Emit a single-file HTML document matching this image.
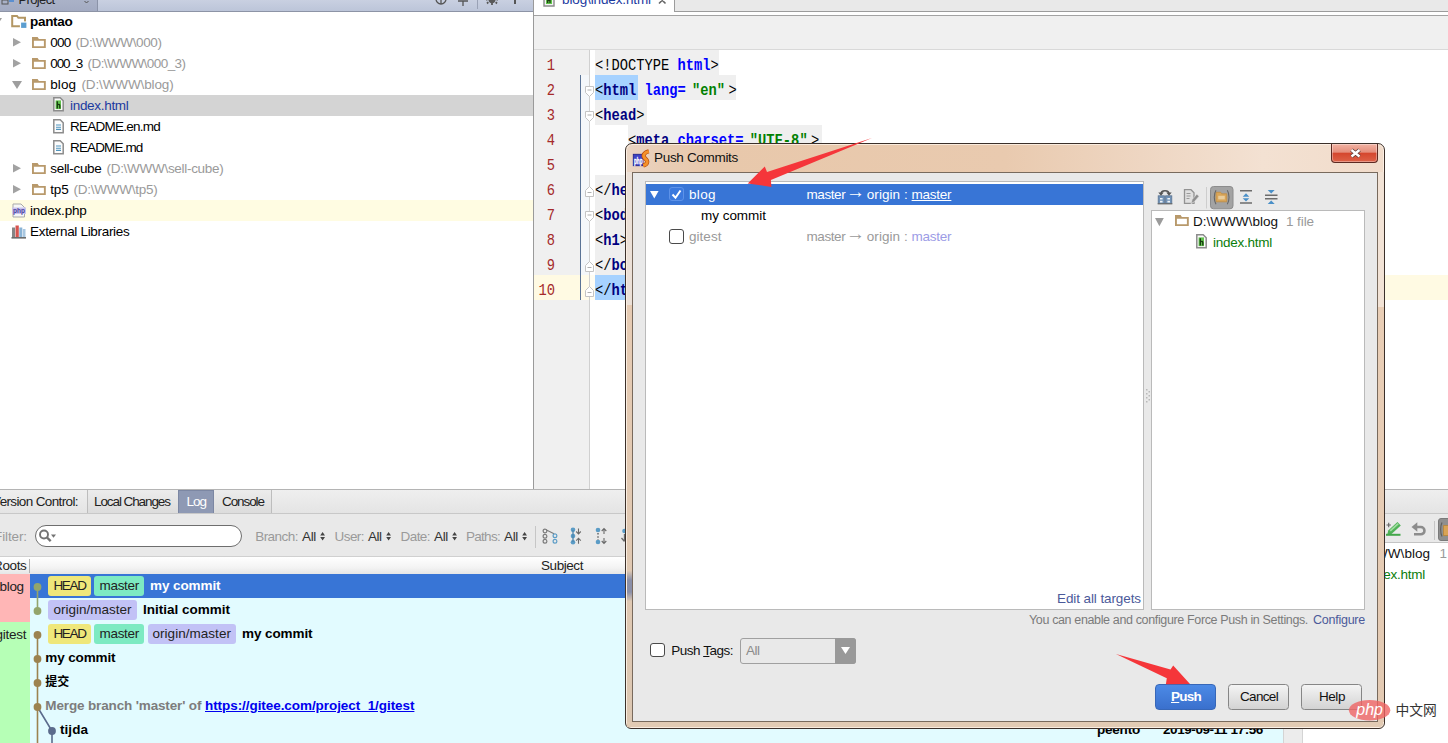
<!DOCTYPE html>
<html lang="en"><head><meta charset="utf-8"><title>Push Commits</title>
<style>
html,body{margin:0;padding:0;}
body{width:1448px;height:743px;overflow:hidden;position:relative;background:#fff;font-family:"Liberation Sans","Noto Sans CJK SC",sans-serif;font-size:13px;}
.t{position:absolute;white-space:pre;line-height:20px;height:20px;}
.code{position:absolute;white-space:pre;font-family:"Liberation Mono",monospace;font-size:16.5px;line-height:25px;height:25px;transform:scaleX(0.8333);transform-origin:0 0;color:#000;}
.code b{font-weight:bold;}
.q1{display:inline-block;width:17.5px;text-align:right;}
.q2{display:inline-block;width:14px;text-align:left;}
.ln{position:absolute;font-family:"Liberation Mono",monospace;font-size:16.5px;line-height:25px;height:25px;color:#a52a2a;transform:scaleX(0.8333);transform-origin:100% 0;text-align:right;}
svg{position:absolute;overflow:visible;}
</style></head><body>
<div style="position:absolute;left:0px;top:0px;width:534px;height:489px;background:#fff;"></div>
<div style="position:absolute;left:0px;top:0px;width:534px;height:11px;background:linear-gradient(#c9d0e1,#bcc5d9);"></div>
<div style="position:absolute;left:0px;top:0px;width:98px;height:11px;background:linear-gradient(#aab2c8,#a3abc2);border-right:1px solid #8b93a8;box-sizing:border-box;"></div>
<div style="position:absolute;left:0px;top:11px;width:534px;height:1px;background:#8d94a6;"></div>
<span class="t " style="left:18.6px;top:-10.2px;font-size:13px;color:#222;letter-spacing:-0.653px;">Project</span>
<svg style="left:0;top:0" width="534" height="12"><g fill="none" stroke="#555" stroke-width="1.3"><circle cx="441" cy="-1" r="5"/><path d="M441 -1v5"/><path d="M458 1h10M463 1v5"/><path d="M477.5 0v9" stroke="#9aa2b6" stroke-width="1"/><circle cx="492" cy="-0.500" r="3.600" fill="#595959" stroke="none"/><path d="M488.300 2.200l-1.300 1.300M492 3v2M495.700 2.200l1.300 1.300M487.500 -0.500h-1.500M496.500 -0.500h1.500" stroke="#595959" stroke-width="1.800"/><path d="M515 0v4" stroke-width="2"/><path d="M84.5 1l2 2 2-2" stroke-width="1"/></g><rect x="2" y="0" width="6" height="4" fill="none" stroke="#555"/><rect x="9" y="0" width="5" height="2" fill="#5b8fd0"/></svg>
<div style="position:absolute;left:0px;top:95px;width:534px;height:21px;background:#d4d4d4;"></div>
<div style="position:absolute;left:0px;top:200px;width:534px;height:21px;background:#fffce2;"></div>
<svg style="left:11px;top:14px" width="17" height="16"><path d="M1.2 2h4.8l1.4 1.8h6.6v8.4h-12.8z" fill="none" stroke="#b39764" stroke-width="2"/><rect x="9.5" y="8" width="6.5" height="6.5" fill="#5c9ed0" stroke="#fff" stroke-width="1.2"/></svg>
<span class="t " style="left:30px;top:11.5px;font-size:13.5px;color:#000;font-weight:bold;letter-spacing:-0.297px;">pantao</span>
<svg style="left:-8px;top:17.9px" width="11" height="9"><path d="M0 0h10l-5 8z" fill="#9e9e9e"/></svg>
<svg style="left:13px;top:38.3px" width="9" height="9"><path d="M0 0l8 4.200-8 4.200z" fill="#a2a2a2"/></svg>
<svg style="left:32px;top:37.1px" width="15" height="12"><path d="M0 0h5.600l1.300 1.900h6.900v9.200h-13.800z M1.900 3.700v5.500h10v-5.500z" fill="#b8996b" fill-rule="evenodd"/></svg>
<span class="t " style="left:50.3px;top:32.5px;font-size:13.5px;color:#000;letter-spacing:-0.782px;">000</span>
<span class="t " style="left:75.5px;top:32.5px;font-size:13.5px;color:#9a9a9a;letter-spacing:-0.396px;">(D:\WWW\000)</span>
<svg style="left:13px;top:59.3px" width="9" height="9"><path d="M0 0l8 4.200-8 4.200z" fill="#a2a2a2"/></svg>
<svg style="left:32px;top:58.1px" width="15" height="12"><path d="M0 0h5.600l1.300 1.900h6.900v9.200h-13.800z M1.900 3.700v5.500h10v-5.500z" fill="#b8996b" fill-rule="evenodd"/></svg>
<span class="t " style="left:50.3px;top:53.5px;font-size:13.5px;color:#000;letter-spacing:-1.176px;">000_3</span>
<span class="t " style="left:87.5px;top:53.5px;font-size:13.5px;color:#9a9a9a;letter-spacing:-0.556px;">(D:\WWW\000_3)</span>
<svg style="left:12px;top:80.9px" width="11" height="9"><path d="M0 0h10l-5 8z" fill="#9e9e9e"/></svg>
<svg style="left:32px;top:79.1px" width="15" height="12"><path d="M0 0h5.600l1.300 1.900h6.900v9.200h-13.800z M1.900 3.700v5.500h10v-5.500z" fill="#b8996b" fill-rule="evenodd"/></svg>
<span class="t " style="left:50.3px;top:74.5px;font-size:13.5px;color:#000;letter-spacing:0.038px;">blog</span>
<span class="t " style="left:81.5px;top:74.5px;font-size:13.5px;color:#9a9a9a;letter-spacing:-0.135px;">(D:\WWW\blog)</span>
<svg style="left:13px;top:164.3px" width="9" height="9"><path d="M0 0l8 4.200-8 4.200z" fill="#a2a2a2"/></svg>
<svg style="left:32px;top:163.1px" width="15" height="12"><path d="M0 0h5.600l1.300 1.900h6.900v9.200h-13.800z M1.900 3.700v5.500h10v-5.500z" fill="#b8996b" fill-rule="evenodd"/></svg>
<span class="t " style="left:50.3px;top:158.5px;font-size:13.5px;color:#000;letter-spacing:-0.318px;">sell-cube</span>
<span class="t " style="left:106.5px;top:158.5px;font-size:13.5px;color:#9a9a9a;letter-spacing:-0.293px;">(D:\WWW\sell-cube)</span>
<svg style="left:13px;top:185.3px" width="9" height="9"><path d="M0 0l8 4.200-8 4.200z" fill="#a2a2a2"/></svg>
<svg style="left:32px;top:184.1px" width="15" height="12"><path d="M0 0h5.600l1.300 1.900h6.900v9.200h-13.800z M1.900 3.700v5.500h10v-5.500z" fill="#b8996b" fill-rule="evenodd"/></svg>
<span class="t " style="left:50.3px;top:179.5px;font-size:13.5px;color:#000;letter-spacing:-0.194px;">tp5</span>
<span class="t " style="left:73.5px;top:179.5px;font-size:13.5px;color:#9a9a9a;letter-spacing:-0.249px;">(D:\WWW\tp5)</span>
<svg style="left:53px;top:97.2px" width="12" height="16"><path d="M0.800 0.800h6.400l3 3v10h-9.400z" fill="#fafafa" stroke="#8c8c8c" stroke-width="1.500"/><rect x="2.600" y="3.400" width="5.400" height="8.700" fill="#62c24e"/><path d="M4.300 4.200v7.200M4.300 8.100c1.200-1 2.500-.8 2.500.4v2.900" stroke="#173a10" stroke-width="1.300" fill="none"/></svg>
<span class="t " style="left:70px;top:95.5px;font-size:13.5px;color:#1b3aa0;letter-spacing:-0.306px;">index.html</span>
<svg style="left:53px;top:118.6px" width="12" height="16"><path d="M0.800 0.800h6.400l3 3v10h-9.400z" fill="#fcfcfc" stroke="#8c8c8c" stroke-width="1.500"/><path d="M3 6h5M3 8.200h5M3 10.400h5" stroke="#4f94bd" stroke-width="1.100"/></svg>
<span class="t " style="left:70px;top:116.5px;font-size:13.5px;color:#000;letter-spacing:-0.754px;">README.en.md</span>
<svg style="left:53px;top:139.6px" width="12" height="16"><path d="M0.800 0.800h6.400l3 3v10h-9.400z" fill="#fcfcfc" stroke="#8c8c8c" stroke-width="1.500"/><path d="M3 6h5M3 8.200h5M3 10.400h5" stroke="#4f94bd" stroke-width="1.100"/></svg>
<span class="t " style="left:70px;top:137.5px;font-size:13.5px;color:#000;letter-spacing:-0.863px;">README.md</span>
<svg style="left:12px;top:203px" width="14" height="15"><path d="M1 1h8l3.5 3.5v9.5h-11.5z" fill="#f6f6f6" stroke="#a9a9a9" stroke-width="1"/><rect x="0" y="4.500" width="14" height="6.500" fill="#c9c3ee"/><text x="7" y="10" font-size="6.500" font-family="Liberation Sans,sans-serif" font-weight="bold" fill="#4b3f9c" text-anchor="middle" textLength="12" lengthAdjust="spacingAndGlyphs">php</text></svg>
<span class="t " style="left:30px;top:200.5px;font-size:13.5px;color:#000;letter-spacing:-0.233px;">index.php</span>
<svg style="left:11px;top:224px" width="15" height="15"><rect x="1" y="3.500" width="3" height="10" fill="#858585"/><rect x="4.500" y="1.500" width="3.300" height="12" fill="#d6544e"/><rect x="8.300" y="3.500" width="3" height="10" fill="#8ab4d6"/><rect x="11.800" y="5" width="2.700" height="8.500" fill="#a9c7e0"/><rect x="0.500" y="13" width="14.500" height="1.600" fill="#6b6b6b"/></svg>
<span class="t " style="left:30px;top:221.5px;font-size:13.5px;color:#000;letter-spacing:-0.312px;">External Libraries</span>
<div style="position:absolute;left:533px;top:0px;width:1px;height:489px;background:#9a9a9a;"></div>
<div style="position:absolute;left:534px;top:0px;width:914px;height:489px;background:#fff;"></div>
<div style="position:absolute;left:674px;top:0px;width:774px;height:12px;background:#e9e9e9;border-left:1px solid #9c9c9c;border-bottom:1px solid #9c9c9c;box-sizing:border-box;"></div>
<div style="position:absolute;left:534px;top:15px;width:914px;height:1px;background:#a3a3a3;"></div>
<div style="position:absolute;left:534px;top:16px;width:914px;height:33px;background:#f0f0f0;"></div>
<div style="position:absolute;left:534px;top:49px;width:914px;height:1px;background:#d9d9d9;"></div>
<svg style="left:543px;top:-8px" width="12" height="15"><path d="M1 1h7l3 3v10h-10z" fill="#f4f4f4" stroke="#8a8a8a" stroke-width="1.4"/><rect x="3" y="4" width="6" height="8" fill="#5fc64a"/><path d="M4.7 5v6M4.7 8.3h2.3v2.7" stroke="#1d3b12" stroke-width="1.3" fill="none"/></svg>
<span class="t " style="left:562px;top:-10px;font-size:13.5px;color:#1b3aa0;letter-spacing:-0.124px;">blog\index.html</span>
<svg style="left:657.500px;top:-4px" width="9" height="9"><path d="M1 1l6.5 6.5M7.5 1l-6.5 6.5" stroke="#666" stroke-width="1.6"/></svg>
<div style="position:absolute;left:534px;top:50px;width:56px;height:439px;background:#f0f0f0;"></div>
<div style="position:absolute;left:581px;top:75px;width:8px;height:200px;background:#f4f7fa;"></div>
<div style="position:absolute;left:534px;top:275px;width:914px;height:25px;background:#fffae3;"></div>
<div style="position:absolute;left:581px;top:275px;width:8px;height:25px;background:#fffbe9;"></div>
<div style="position:absolute;left:590px;top:275px;width:5px;height:25px;background:#fffdf2;"></div>
<div style="position:absolute;left:589px;top:50px;width:1px;height:439px;background:#d0d0d0;"></div>
<div style="position:absolute;left:580px;top:75px;width:1px;height:225px;background:#5a7396;"></div>
<div style="position:absolute;left:595px;top:50px;width:124.05px;height:25px;background:#efefef;"></div>
<div style="position:absolute;left:595px;top:75px;width:140.59px;height:25px;background:#efefef;"></div>
<div style="position:absolute;left:595px;top:100px;width:52.101px;height:25px;background:#efefef;"></div>
<div style="position:absolute;left:628.08px;top:125px;width:194.345px;height:25px;background:#efefef;"></div>
<div style="position:absolute;left:595px;top:175px;width:57.89px;height:25px;background:#efefef;"></div>
<div style="position:absolute;left:595px;top:200px;width:49.62px;height:25px;background:#efefef;"></div>
<div style="position:absolute;left:595px;top:225px;width:165.4px;height:25px;background:#efefef;"></div>
<div style="position:absolute;left:595px;top:250px;width:57.89px;height:25px;background:#efefef;"></div>
<div style="position:absolute;left:595px;top:75px;width:43.004px;height:25px;background:#a6d2ff;"></div>
<div style="position:absolute;left:595px;top:275px;width:51.274px;height:25px;background:#a6d2ff;"></div>
<div class="code" style="left:595px;top:52.5px">&lt;!DOCTYPE <b style="color:#0000ff">html</b>&gt;</div>
<div class="code" style="left:595px;top:77.5px">&lt;<b style="color:#000080">html</b> <b style="color:#0000ff">lang=</b><b class="q1" style="color:#008000">"</b><b style="color:#008000">en</b><b class="q2" style="color:#008000">"</b>&gt;</div>
<div class="code" style="left:595px;top:102.5px">&lt;<b style="color:#000080">head</b>&gt;</div>
<div class="code" style="left:595px;top:127.5px">    &lt;<b style="color:#000080">meta</b> <b style="color:#0000ff">charset=</b><b class="q1" style="color:#008000">"</b><b style="color:#008000">UTF-8</b><b class="q2" style="color:#008000">"</b>&gt;</div>
<div class="code" style="left:595px;top:152.5px">    &lt;<b style="color:#000080">title</b>&gt;Title&lt;/<b style="color:#000080">title</b>&gt;</div>
<div class="code" style="left:595px;top:177.5px">&lt;/<b style="color:#000080">head</b>&gt;</div>
<div class="code" style="left:595px;top:202.5px">&lt;<b style="color:#000080">body</b>&gt;</div>
<div class="code" style="left:595px;top:227.5px">&lt;<b style="color:#000080">h1</b>&gt;hello world&lt;/<b style="color:#000080">h1</b>&gt;</div>
<div class="code" style="left:595px;top:252.5px">&lt;/<b style="color:#000080">body</b>&gt;</div>
<div class="code" style="left:595px;top:277.5px">&lt;/<b style="color:#000080">html</b>&gt;</div>
<div class="ln" style="left:514.500px;width:40px;top:52.5px">1</div>
<div class="ln" style="left:514.500px;width:40px;top:77.5px">2</div>
<div class="ln" style="left:514.500px;width:40px;top:102.5px">3</div>
<div class="ln" style="left:514.500px;width:40px;top:127.5px">4</div>
<div class="ln" style="left:514.500px;width:40px;top:152.5px">5</div>
<div class="ln" style="left:514.500px;width:40px;top:177.5px">6</div>
<div class="ln" style="left:514.500px;width:40px;top:202.5px">7</div>
<div class="ln" style="left:514.500px;width:40px;top:227.5px">8</div>
<div class="ln" style="left:514.500px;width:40px;top:252.5px">9</div>
<div class="ln" style="left:514.500px;width:40px;top:277.5px">10</div>
<svg style="left:585px;top:86px" width="9" height="13"><path d="M0.5 0.5h8v6l-4 4-4-4z" fill="#fff" stroke="#c4c4c4"/><path d="M2.5 4 h4" stroke="#b0b0b0"/></svg>
<svg style="left:585px;top:111px" width="9" height="13"><path d="M0.5 0.5h8v6l-4 4-4-4z" fill="#fff" stroke="#c4c4c4"/><path d="M2.5 4 h4" stroke="#b0b0b0"/></svg>
<svg style="left:585px;top:211px" width="9" height="13"><path d="M0.5 0.5h8v6l-4 4-4-4z" fill="#fff" stroke="#c4c4c4"/><path d="M2.5 4 h4" stroke="#b0b0b0"/></svg>
<svg style="left:585px;top:186px" width="9" height="13"><path d="M0.5 10.500h8v-6l-4-4-4 4z" fill="#fff" stroke="#c4c4c4"/><path d="M2.5 6.5 h4" stroke="#b0b0b0"/></svg>
<svg style="left:585px;top:261px" width="9" height="13"><path d="M0.5 10.500h8v-6l-4-4-4 4z" fill="#fff" stroke="#c4c4c4"/><path d="M2.5 6.5 h4" stroke="#b0b0b0"/></svg>
<svg style="left:585px;top:286px" width="9" height="13"><path d="M0.5 10.500h8v-6l-4-4-4 4z" fill="#fff" stroke="#c4c4c4"/><path d="M2.5 6.5 h4" stroke="#b0b0b0"/></svg>
<div style="position:absolute;left:0px;top:489px;width:1448px;height:254px;background:#fff;"></div>
<div style="position:absolute;left:0px;top:489px;width:1448px;height:1px;background:#b4b4b4;"></div>
<div style="position:absolute;left:0px;top:490px;width:1448px;height:23px;background:linear-gradient(#efefef,#e4e4e4);"></div>
<div style="position:absolute;left:0px;top:513px;width:1448px;height:1px;background:#c8c8c8;"></div>
<div style="position:absolute;left:0px;top:514px;width:1448px;height:43px;background:#e9e9e9;"></div>
<span class="t " style="left:-8px;top:491.5px;font-size:13.5px;color:#222;letter-spacing:-0.631px;">Version Control:</span>
<div style="position:absolute;left:86.5px;top:490px;width:92px;height:23px;background:linear-gradient(#ececec,#dcdcdc);border-left:1px solid #bdbdbd;border-right:1px solid #bdbdbd;box-sizing:border-box;"></div>
<span class="t " style="left:94px;top:491.5px;font-size:13.5px;color:#222;letter-spacing:-1.087px;">Local Changes</span>
<div style="position:absolute;left:178px;top:490px;width:36px;height:23px;background:#8e99b4;border:1px solid #7c87a3;border-bottom:none;box-sizing:border-box;"></div>
<span class="t " style="left:186.5px;top:491.5px;font-size:13.5px;color:#fff;letter-spacing:-1.016px;">Log</span>
<div style="position:absolute;left:214px;top:490px;width:58px;height:23px;background:linear-gradient(#ececec,#dcdcdc);border-right:1px solid #bdbdbd;box-sizing:border-box;"></div>
<span class="t " style="left:222px;top:491.5px;font-size:13.5px;color:#222;letter-spacing:-1.080px;">Console</span>
<span class="t " style="left:-6px;top:526.8px;font-size:13.5px;color:#9a9a9a;letter-spacing:-0.109px;">Filter:</span>
<div style="position:absolute;left:35px;top:525px;width:207px;height:22px;background:#fff;border:1px solid #6e6e6e;border-radius:11px;box-sizing:border-box;"></div>
<svg style="left:38px;top:528px" width="20" height="16"><circle cx="6" cy="6.500" r="4" fill="none" stroke="#747474" stroke-width="1.900"/><path d="M9 9.500l3.700 3.700" stroke="#747474" stroke-width="2.400"/><path d="M13 6.500h5l-2.500 3.200z" fill="#747474"/></svg>
<span class="t " style="left:255.2px;top:526.8px;font-size:13.5px;color:#9a9a9a;letter-spacing:-0.535px;">Branch:</span>
<span class="t " style="left:302px;top:526.8px;font-size:13.5px;color:#333;letter-spacing:-0.333px;">All</span>
<svg style="left:319.6px;top:531.800px" width="6" height="9"><path d="M2.600 0l2.400 3.400h-4.800zM2.600 8.500l2.400-3.400h-4.800z" fill="#444"/></svg>
<span class="t " style="left:334.5px;top:526.8px;font-size:13.5px;color:#9a9a9a;letter-spacing:-0.553px;">User:</span>
<span class="t " style="left:368px;top:526.8px;font-size:13.5px;color:#333;letter-spacing:-0.500px;">All</span>
<svg style="left:386.1px;top:531.800px" width="6" height="9"><path d="M2.600 0l2.400 3.400h-4.800zM2.600 8.500l2.400-3.400h-4.800z" fill="#444"/></svg>
<span class="t " style="left:400.5px;top:526.8px;font-size:13.5px;color:#9a9a9a;letter-spacing:-0.556px;">Date:</span>
<span class="t " style="left:434px;top:526.8px;font-size:13.5px;color:#333;letter-spacing:-0.333px;">All</span>
<svg style="left:452.1px;top:531.800px" width="6" height="9"><path d="M2.600 0l2.400 3.400h-4.800zM2.600 8.500l2.400-3.400h-4.800z" fill="#444"/></svg>
<span class="t " style="left:466px;top:526.8px;font-size:13.5px;color:#9a9a9a;letter-spacing:-0.714px;">Paths:</span>
<span class="t " style="left:504px;top:526.8px;font-size:13.5px;color:#333;letter-spacing:-0.333px;">All</span>
<svg style="left:522.1px;top:531.800px" width="6" height="9"><path d="M2.600 0l2.400 3.400h-4.800zM2.600 8.500l2.400-3.400h-4.800z" fill="#444"/></svg>
<div style="position:absolute;left:535px;top:526px;width:1px;height:22px;background:#c6c6c6;"></div>
<svg style="left:0px;top:0px" width="640" height="560"><g fill="none" stroke="#7a7a7a" stroke-width="1.2"><circle cx="545" cy="531" r="1.900"/><circle cx="545" cy="536.200" r="1.900"/><circle cx="545" cy="541.300" r="1.900"/><path d="M546.500 530l7.500 3.700"/></g><g fill="none" stroke="#5b9cc6" stroke-width="1.200"><circle cx="555" cy="535.700" r="1.900"/><circle cx="555" cy="541.300" r="1.900"/></g><g fill="#5b9cc6"><circle cx="573" cy="529.800" r="2.300"/><circle cx="573" cy="536" r="2.300"/><circle cx="573" cy="542.200" r="2.300"/></g><path d="M573 530v12" stroke="#4d86ad" stroke-width="1.300"/><g fill="none" stroke="#6a6a6a" stroke-width="1.100"><path d="M578.500 528.500v5.300M576.200 531.500l2.300 2.400 2.300-2.400M578.500 543.700v-5.300M576.200 540.600l2.300-2.400 2.300 2.400"/></g><g fill="#5b9cc6"><circle cx="598" cy="530" r="2.300"/><circle cx="598" cy="542" r="2.300"/></g><path d="M598 533v7" stroke="#555" stroke-width="1.300" stroke-dasharray="1.600 1.600"/><g fill="none" stroke="#6a6a6a" stroke-width="1.100"><path d="M604 534v-5.300M601.700 531l2.300-2.400 2.300 2.400M604 538v5.300M601.700 541l2.300 2.400 2.300-2.400"/></g><circle cx="624.500" cy="531" r="2.300" fill="#5b9cc6"/><path d="M624.500 534v7M621.500 538l3 3.500" fill="none" stroke="#6a6a6a" stroke-width="1.300"/></svg>
<div style="position:absolute;left:0px;top:557px;width:1448px;height:17px;background:linear-gradient(#fff,#f4f4f4 60%,#e6e6e6);"></div>
<div style="position:absolute;left:0px;top:556px;width:1448px;height:1px;background:#d0d0d0;"></div>
<span class="t " style="left:-7px;top:556px;font-size:13.5px;color:#222;letter-spacing:-0.356px;">Roots</span>
<div style="position:absolute;left:29px;top:559px;width:1px;height:14px;background:#b0b0b0;"></div>
<span class="t " style="left:541px;top:556px;font-size:13.5px;color:#222;letter-spacing:-0.435px;">Subject</span>
<div style="position:absolute;left:30px;top:574px;width:1354px;height:24px;background:#3875d6;"></div>
<div style="position:absolute;left:30px;top:598px;width:1253px;height:145px;background:#e2fbff;"></div>
<div style="position:absolute;left:1283px;top:598px;width:20px;height:145px;background:#ececec;border-left:1px solid #d4d4d4;border-right:1px solid #d4d4d4;box-sizing:border-box;"></div>
<div style="position:absolute;left:0px;top:574px;width:30px;height:48px;background:#ffb6b6;"></div>
<div style="position:absolute;left:0px;top:622px;width:30px;height:121px;background:#b6ffb6;"></div>
<span class="t " style="left:-0.5px;top:577px;font-size:13.5px;color:#222;letter-spacing:-0.312px;">blog</span>
<span class="t " style="left:-4.5px;top:625px;font-size:13.5px;color:#222;letter-spacing:-0.264px;">gitest</span>
<svg style="left:30px;top:574.600px" width="40" height="169"><path d="M7.500 12v24" stroke="#93a56b" stroke-width="1.6"/><circle cx="7.500" cy="12" r="3.900" fill="#93a56b"/><circle cx="7.500" cy="36" r="3.900" fill="#93a56b"/><path d="M7.500 60v110" stroke="#9c8250" stroke-width="1.6"/><path d="M7.500 132l14.500 24v14" stroke="#5b6b8c" stroke-width="1.600" fill="none"/><circle cx="7.500" cy="60" r="3.900" fill="#9c8250"/><circle cx="7.500" cy="84" r="3.900" fill="#9c8250"/><circle cx="7.500" cy="108" r="3.900" fill="#9c8250"/><circle cx="7.500" cy="132" r="3.900" fill="#9c8250"/><circle cx="22" cy="156" r="3.900" fill="#5b6b8c"/></svg>
<div style="position:absolute;left:48.2px;top:576.2px;width:42.4px;height:19.8px;background:#efe77a;border-radius:3px;"></div>
<span class="t " style="left:53.5px;top:576px;font-size:13.5px;color:#222;letter-spacing:-1.375px;">HEAD</span>
<div style="position:absolute;left:94.1px;top:576.2px;width:49.9px;height:19.8px;background:#7deac2;border-radius:3px;"></div>
<span class="t " style="left:99.5px;top:576px;font-size:13.5px;color:#222;letter-spacing:-0.297px;">master</span>
<span class="t " style="left:150px;top:576px;font-size:13.5px;color:#fff;font-weight:bold;letter-spacing:-0.087px;">my commit</span>
<div style="position:absolute;left:48.2px;top:600px;width:88.4px;height:19.8px;background:#c2c2f6;border-radius:3px;"></div>
<span class="t " style="left:53.5px;top:599.8px;font-size:13.5px;color:#222;letter-spacing:-0.006px;">origin/master</span>
<span class="t " style="left:143px;top:599.8px;font-size:13.5px;color:#000;font-weight:bold;letter-spacing:-0.002px;">Initial commit</span>
<div style="position:absolute;left:48.2px;top:624px;width:42.4px;height:19.8px;background:#efe77a;border-radius:3px;"></div>
<span class="t " style="left:53.5px;top:623.8px;font-size:13.5px;color:#222;letter-spacing:-1.375px;">HEAD</span>
<div style="position:absolute;left:94.1px;top:624px;width:49.9px;height:19.8px;background:#7deac2;border-radius:3px;"></div>
<span class="t " style="left:99.5px;top:623.8px;font-size:13.5px;color:#222;letter-spacing:-0.297px;">master</span>
<div style="position:absolute;left:147.5px;top:624px;width:88.5px;height:19.8px;background:#c2c2f6;border-radius:3px;"></div>
<span class="t " style="left:152.5px;top:623.8px;font-size:13.5px;color:#222;letter-spacing:0.032px;">origin/master</span>
<span class="t " style="left:242px;top:623.8px;font-size:13.5px;color:#000;font-weight:bold;letter-spacing:-0.087px;">my commit</span>
<span class="t " style="left:45.3px;top:647.6px;font-size:13.5px;color:#000;font-weight:bold;letter-spacing:-0.120px;">my commit</span>
<span class="t " style="left:45.3px;top:671.5px;font-size:12px;color:#000;font-weight:bold;">提交</span>
<span class="t " style="left:45.3px;top:695.5px;font-size:13.5px;color:#7d7d7d;font-weight:bold;letter-spacing:-0.143px;">Merge branch &#x27;master&#x27; of </span>
<span class="t " style="left:205px;top:695.5px;font-size:13.5px;color:#0000ee;font-weight:bold;letter-spacing:-0.063px;text-decoration:underline;">https://gitee.com/project_1/gitest</span>
<span class="t " style="left:60px;top:719.6px;font-size:13.5px;color:#000;font-weight:bold;letter-spacing:0.047px;">tijda</span>
<span class="t " style="left:1097px;top:720px;font-size:13.5px;color:#000;font-weight:bold;letter-spacing:-0.214px;">peento</span>
<span class="t " style="left:1163px;top:720px;font-size:13.5px;color:#000;font-weight:bold;letter-spacing:-0.418px;">2019-09-11 17:56</span>
<div style="position:absolute;left:1385px;top:514px;width:63px;height:28px;background:#e9e9e9;"></div>
<div style="position:absolute;left:1385px;top:542px;width:63px;height:1px;background:#c4c4c4;"></div>
<div style="position:absolute;left:1385px;top:543px;width:63px;height:200px;background:#fff;"></div>
<svg style="left:1385px;top:519px" width="63" height="23"><path d="M3.200 11.400l9.300-8.400 3.300 3.500-9.300 8.400-4.300 1z" fill="#4fb257"/><path d="M4.600 11.300l8-7.200 1.200 1.200-8 7.200z" fill="#9fdc9f"/><path d="M1 15.800h14.500" stroke="#43a64a" stroke-width="2"/><path d="M1.500 6h4.400M3.700 3.800v4.400" stroke="#666" stroke-width="1.100"/><path d="M31 8h4.800a3.650 3.650 0 0 1 0 7.300h-6.800" fill="none" stroke="#8c8c8c" stroke-width="2.600"/><path d="M26.500 8l5.800-4.800v9.600z" fill="#8c8c8c"/><path d="M49.500 2v19" stroke="#c6c6c6"/><rect x="53.500" y="-0.500" width="20" height="22" rx="2.500" fill="#8f8f8f" stroke="#7a7a7a"/><path d="M58.500 6.500h5v10h-5z" fill="#d9a355" stroke="#b98436" stroke-width=".8"/><path d="M57 3.500c-1.800 3.500-1.800 10.500 0 14" fill="none" stroke="#5e5e5e" stroke-width="1.100"/></svg>
<span class="t " style="left:1345px;top:543.6px;font-size:13.5px;color:#111;letter-spacing:0.023px;">D:\WWW\blog</span>
<span class="t " style="left:1439.4px;top:543.6px;font-size:13.5px;color:#9a9a9a;letter-spacing:-0.089px;">1 file</span>
<span class="t " style="left:1366px;top:564.7px;font-size:13.5px;color:#0a7d0a;letter-spacing:-0.256px;">index.html</span>
<div style="position:absolute;left:625px;top:143px;width:760px;height:586px;background:linear-gradient(90deg,#ead5c4 0%,#e9cdb5 5%,#e8c8ab 12%,#e9caaf 50%,#eed6c2 68%,#f3e1d2 84%,#f1dccb 100%);border-radius:7px 7px 6px 6px;box-sizing:border-box;border:1px solid #3b302a;box-shadow:inset 0 0 0 1px rgba(255,246,236,.75);"></div>
<div style="position:absolute;left:627px;top:172px;width:5px;height:133px;background:#ebe0d7;"></div>
<div style="position:absolute;left:627px;top:305px;width:5px;height:422px;background:linear-gradient(#e6cbb3,#dcc7b2);"></div>
<div style="position:absolute;left:1378px;top:172px;width:5.5px;height:135px;background:#f2e3d6;"></div>
<div style="position:absolute;left:1378px;top:307px;width:5.5px;height:415px;background:linear-gradient(#e9ceb6,#e3cab3);"></div>
<div style="position:absolute;left:627px;top:722px;width:756px;height:5px;background:#e2cbb4;border-radius:0 0 4px 4px;"></div>
<div style="position:absolute;left:627px;top:571px;width:5px;height:30px;background:linear-gradient(#dcc7b2,#8a8fa8 30%,#8a8fa8 70%,#dcc7b2);"></div>
<div style="position:absolute;left:632px;top:172px;width:746px;height:550px;background:#e9e9e9;border:1px solid #786a5d;box-sizing:border-box;"></div>
<svg style="left:632px;top:149px" width="20" height="19"><rect x="1.300" y="5.300" width="9.700" height="11.400" fill="#3d42c4" stroke="#22258c" stroke-width=".9"/><text x="6.200" y="14.600" font-size="8.500" font-family="Liberation Sans,sans-serif" font-weight="bold" fill="#fff" text-anchor="middle" textLength="8.600" lengthAdjust="spacingAndGlyphs" stroke="#fff" stroke-width=".35">php</text><path d="M16.800 2.300C11.500 3.600 10.300 7 13.300 9.600C16.300 12.200 15.800 15.200 11.300 16.600" fill="none" stroke="#b4470b" stroke-width="4.200" stroke-linecap="butt"/><path d="M16.800 2.300C11.500 3.600 10.300 7 13.300 9.600C16.300 12.200 15.800 15.200 11.300 16.600" fill="none" stroke="#f4912a" stroke-width="2.900" stroke-linecap="butt"/></svg>
<span class="t " style="left:654px;top:148px;font-size:13.5px;color:#111;letter-spacing:-0.316px;">Push Commits</span>
<div style="position:absolute;left:1331px;top:144px;width:47px;height:19px;background:linear-gradient(#f2b3a3 0%,#e58e7c 45%,#d5472e 52%,#dd6248 100%);border:1px solid #5c2a22;border-top:none;border-radius:0 0 4px 4px;box-sizing:border-box;box-shadow:inset 0 0 0 1px rgba(255,255,255,.35);"></div>
<svg style="left:1348px;top:147px" width="16" height="12"><path d="M3.500 3l8 6.500M11.500 3l-8 6.500" stroke="#5a3a36" stroke-width="4"/><path d="M3.500 3l8 6.500M11.500 3l-8 6.500" stroke="#fff" stroke-width="2.400"/></svg>
<div style="position:absolute;left:645px;top:181px;width:499px;height:429px;background:#fff;border:1px solid #bababa;box-sizing:border-box;"></div>
<div style="position:absolute;left:646px;top:184px;width:497px;height:20.7px;background:#3875d6;"></div>
<svg style="left:649.500px;top:190.700px" width="9" height="8"><path d="M0 0h8.600l-4.300 7.600z" fill="#fff"/></svg>
<div style="position:absolute;left:669.3px;top:187.3px;width:14.5px;height:14px;background:#3b79de;border:1px solid #5d92e8;border-radius:3px;box-sizing:border-box;"></div>
<svg style="left:669px;top:187px" width="15" height="15"><path d="M3.500 7.500l3 3.200 5-7.200" fill="none" stroke="#fff" stroke-width="2"/></svg>
<span class="t " style="left:689px;top:184.5px;font-size:13.5px;color:#fff;letter-spacing:0.363px;">blog</span>
<span class="t " style="left:806.5px;top:184.5px;font-size:13.5px;color:#fff;letter-spacing:-0.414px;">master</span>
<span class="t " style="left:846.1px;top:182.3px;font-size:19px;color:#fff;">→</span>
<span class="t " style="left:866.8px;top:184.5px;font-size:13.5px;color:#fff;letter-spacing:0.056px;">origin : </span>
<span class="t " style="left:911.6px;top:184.5px;font-size:13.5px;color:#fff;letter-spacing:-0.247px;text-decoration:underline;">master</span>
<span class="t " style="left:701px;top:205.5px;font-size:13.5px;color:#000;letter-spacing:-0.030px;">my commit</span>
<div style="position:absolute;left:669px;top:228.5px;width:15px;height:15px;background:#fff;border:1px solid #4a4a4a;border-radius:3px;box-sizing:border-box;"></div>
<span class="t " style="left:689px;top:226.5px;font-size:13.5px;color:#9a9a9a;letter-spacing:0.036px;">gitest</span>
<span class="t " style="left:806.5px;top:226.5px;font-size:13.5px;color:#9a9a9a;letter-spacing:-0.414px;">master</span>
<span class="t " style="left:846.1px;top:224.3px;font-size:19px;color:#9a9a9a;">→</span>
<span class="t " style="left:866.8px;top:226.5px;font-size:13.5px;color:#9a9a9a;letter-spacing:0.056px;">origin : </span>
<span class="t " style="left:911.6px;top:226.5px;font-size:13.5px;color:#9c9ce6;letter-spacing:-0.247px;">master</span>
<span class="t " style="left:1057px;top:588.8px;font-size:13.5px;color:#4b5a9a;letter-spacing:-0.099px;">Edit all targets</span>
<svg style="left:1145px;top:388px" width="6" height="16"><g fill="#b9b9b9"><rect x="1" y="1" width="1.500" height="1.500"/><rect x="3.500" y="3" width="1.500" height="1.500"/><rect x="1" y="5" width="1.500" height="1.500"/><rect x="3.500" y="7" width="1.500" height="1.500"/><rect x="1" y="9" width="1.500" height="1.500"/><rect x="3.500" y="11" width="1.500" height="1.500"/><rect x="1" y="13" width="1.500" height="1.500"/></g></svg>
<svg style="left:1155px;top:186px" width="130" height="24"><g><rect x="3.200" y="9.800" width="6.200" height="7.800" fill="#7192b6" stroke="#5b7492" stroke-width=".8"/><rect x="10.600" y="9.800" width="6.200" height="7.800" fill="#7192b6" stroke="#5b7492" stroke-width=".8"/><path d="M5 12h2.600v1.600h-2.600zM5 14.800h2.600v1.600h-2.600zM12.400 12h2.600v1.600h-2.600zM12.400 14.800h2.600v1.600h-2.600z" fill="#eef3f8"/><path d="M6 8.200c0-4.600 8-4.600 8 0" fill="none" stroke="#555" stroke-width="1.700"/><path d="M3.300 6.600h5.400l-2.700 3.200zM11.300 6.600h5.400l-2.700 3.200z" fill="#555"/><path d="M2.700 17.800h14.600" stroke="#6b6b6b" stroke-width="1.200"/></g><g><path d="M29.500 3.700h6.500l3 3v10.600h-9.500z" fill="#e0e0e0" stroke="#929292" stroke-width="1.300"/><path d="M31.500 7.500h4M31.500 10h4M31.500 12.500h3" stroke="#9a9a9a" stroke-width="1"/><path d="M36 17.800l1.200-4.300 4.600-5.300 2.300 2-4.600 5.300z" fill="#8e8e8e" stroke="#e6e6e6" stroke-width=".6"/></g><path d="M51.500 1v21.500" stroke="#cdcdcd"/><rect x="55.500" y="0.500" width="22.500" height="22.300" rx="3" fill="#a3a3a3" stroke="#8c8c8c"/><path d="M61 6.300h4.600l1.200 1.500h5v8h-10.800z" fill="#d8a559" stroke="#c08d42" stroke-width=".8"/><rect x="63.200" y="9.800" width="6.600" height="3.600" fill="#e9cd9c"/><path d="M61 4.300c-2.300 3.600-2.300 10.400 0 14M72.300 4.300c2.300 3.600 2.300 10.400 0 14" fill="none" stroke="#666" stroke-width="1.100"/><g><path d="M85 4.700h12M85 17h12" stroke="#6c6c6c" stroke-width="1.500"/><path d="M91 7.300l3.300 3.400h-6.600zM91 15.600l3.300-3.400h-6.600z" fill="#4a90c8"/></g><g><path d="M110 9.200h12.500M110 12.700h12.500" stroke="#6c6c6c" stroke-width="1.400"/><path d="M116.200 7.500l3.500-3.600h-7zM116.200 14.400l3.500 3.600h-7z" fill="#4a90c8"/></g></svg>
<div style="position:absolute;left:1151px;top:210px;width:214px;height:400px;background:#fff;border:1px solid #bababa;box-sizing:border-box;"></div>
<svg style="left:1155.200px;top:218px" width="9" height="9"><path d="M0 0h8.800l-4.400 8.200z" fill="#9b9b9b"/></svg>
<svg style="left:1175px;top:215.3px" width="15" height="12"><path d="M0 0h5.600l1.300 1.900h6.900v9.200h-13.800z M1.900 3.700v5.500h10v-5.500z" fill="#b8996b" fill-rule="evenodd"/></svg>
<span class="t " style="left:1193px;top:211.6px;font-size:13.5px;color:#111;letter-spacing:0.023px;">D:\WWW\blog</span>
<span class="t " style="left:1286px;top:211.6px;font-size:13.5px;color:#9a9a9a;letter-spacing:-0.089px;">1 file</span>
<svg style="left:1196px;top:234.4px" width="12" height="16"><path d="M0.800 0.800h6.400l3 3v10h-9.400z" fill="#fafafa" stroke="#8c8c8c" stroke-width="1.500"/><rect x="2.600" y="3.400" width="5.400" height="8.700" fill="#62c24e"/><path d="M4.300 4.200v7.200M4.300 8.100c1.200-1 2.500-.8 2.500.4v2.900" stroke="#173a10" stroke-width="1.300" fill="none"/></svg>
<span class="t " style="left:1213px;top:232.7px;font-size:13.5px;color:#0a7d0a;letter-spacing:-0.256px;">index.html</span>
<span class="t " style="left:1029px;top:609.8px;font-size:12.5px;color:#7b7b7b;letter-spacing:-0.359px;">You can enable and configure Force Push in Settings.</span>
<span class="t " style="left:1313px;top:609.8px;font-size:12.5px;color:#4b5a9a;letter-spacing:-0.245px;">Configure</span>
<div style="position:absolute;left:650px;top:643px;width:15px;height:14px;background:#fff;border:1px solid #4a4a4a;border-radius:3px;box-sizing:border-box;"></div>
<span class="t " style="left:671.3px;top:640.7px;font-size:13.5px;color:#111;letter-spacing:-0.486px;">Push <u>T</u>ags:</span>
<div style="position:absolute;left:740px;top:638px;width:116px;height:26px;background:#e9e9e9;border:1px solid #a0a0a0;border-radius:3px;box-sizing:border-box;"></div>
<div style="position:absolute;left:835px;top:638px;width:21px;height:26px;background:#999;border-radius:0 3px 3px 0;"></div>
<svg style="left:841px;top:647px" width="9" height="8"><path d="M0 0h9l-4.500 7z" fill="#fff"/></svg>
<span class="t " style="left:746px;top:640.7px;font-size:13.5px;color:#8c8c8c;letter-spacing:-0.500px;">All</span>
<div style="position:absolute;left:1155px;top:684px;width:61px;height:26px;background:linear-gradient(#4c8ae6,#3a70cd);border:1px solid #3767b8;border-radius:4px;box-sizing:border-box;"></div>
<span class="t " style="left:1171px;top:686.5px;font-size:13.5px;color:#fff;font-weight:bold;letter-spacing:-0.754px;"><u>P</u>ush</span>
<div style="position:absolute;left:1228px;top:684px;width:61px;height:26px;background:linear-gradient(#f4f4f4,#d3d3d3);border:1px solid #868686;border-radius:3.500px;box-sizing:border-box;"></div>
<span class="t " style="left:1240px;top:686.5px;font-size:13.5px;color:#111;letter-spacing:-0.674px;">Cancel</span>
<div style="position:absolute;left:1301px;top:684px;width:61px;height:26px;background:linear-gradient(#f4f4f4,#d3d3d3);border:1px solid #868686;border-radius:3.500px;box-sizing:border-box;"></div>
<span class="t " style="left:1319px;top:686.5px;font-size:13.5px;color:#111;letter-spacing:-0.445px;">Help</span>
<svg style="left:0;top:0" width="1448" height="743"><path d="M872 138 L767 172 L764.800 166.400 L747.700 183.600 L771.400 186.900 L770.900 180 Z" fill="#f5363a"/><path d="M1115.900 654 L1170.500 669.600 L1173.200 665.600 L1190 684 L1165.900 684.200 L1166.800 678.200 Z" fill="#f5363a"/></svg>
<svg style="left:1345px;top:696px" width="100" height="30"><ellipse cx="24.600" cy="14.200" rx="20.700" ry="10.300" fill="#ef6464" fill-opacity=".8"/><text x="24.600" y="19" font-size="16" font-style="italic" font-family="Liberation Sans,sans-serif" fill="#fff" text-anchor="middle">php</text></svg>
<span class="t " style="left:1395.5px;top:701px;font-size:13.8px;color:#333;">中文网</span>
</body></html>
